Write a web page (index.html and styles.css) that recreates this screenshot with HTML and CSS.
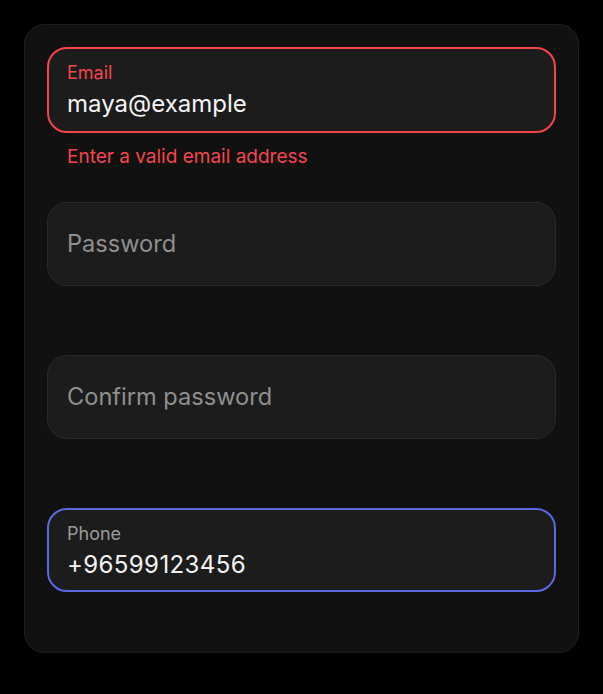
FILE: index.html
```html
<!DOCTYPE html>
<html lang="en">
<head>
<meta charset="utf-8">
<title>Form</title>
<link rel="stylesheet" href="styles.css">
</head>
<body>
<div class="page">
  <form class="card">
    <div class="group">
      <div class="field field--error field--tall">
        <span class="label">Email</span>
        <span class="value">maya@example</span>
      </div>
      <div class="helper helper--error">Enter a valid email address</div>
    </div>
    <div class="group">
      <div class="field">
        <span class="placeholder">Password</span>
      </div>
      <div class="helper"></div>
    </div>
    <div class="group">
      <div class="field">
        <span class="placeholder">Confirm password</span>
      </div>
      <div class="helper"></div>
    </div>
    <div class="group">
      <div class="field field--focus">
        <span class="label">Phone</span>
        <span class="value value--num">+96599123456</span>
      </div>
      <div class="helper"></div>
    </div>
  </form>
</div>
</body>
</html>
```

FILE: styles.css
```css
* { box-sizing: border-box; }
html, body {
  margin: 0;
  background: #000;
  font-family: Inter, "Noto Sans", sans-serif;
  color: #f2f2f2;
}
.page {
  padding: 24px;
  width: 603px;
}
.card {
  width: 555px;
  background: #111111;
  border: 1px solid #1f1f1f;
  border-radius: 20px;
  padding: 22px 22px 24px;
  display: flex;
  flex-direction: column;
  gap: 33px;
}
.group {
  display: flex;
  flex-direction: column;
}
.field {
  height: 84px;
  background: #1c1c1c;
  border: 1px solid #2a2a2a;
  border-radius: 20px;
  padding: 0 19px;
  display: flex;
  flex-direction: column;
  justify-content: center;
  gap: 5px;
}
.field--tall { height: 86px; }
.field--error {
  border: 2px solid #f5454b;
  padding: 0 18px;
}
.field--focus {
  border: 2px solid #5b69e3;
  padding: 2px 18px 0;
}
.label {
  font-size: 18px;
  line-height: 22px;
  color: #9a9a9a;
}
.field--error .label { color: #f5454b; }
.value {
  font-size: 24px;
  line-height: 30px;
  color: #f4f4f4;
}
.value--num { letter-spacing: 0.4px; }
.placeholder {
  font-size: 23.6px;
  line-height: 30px;
  color: #8f8f8f;
}
.helper {
  margin-top: 12px;
  height: 24px;
  font-size: 19px;
  line-height: 24px;
  padding-left: 20px;
}
.helper--error { color: #f5454b; }
```
